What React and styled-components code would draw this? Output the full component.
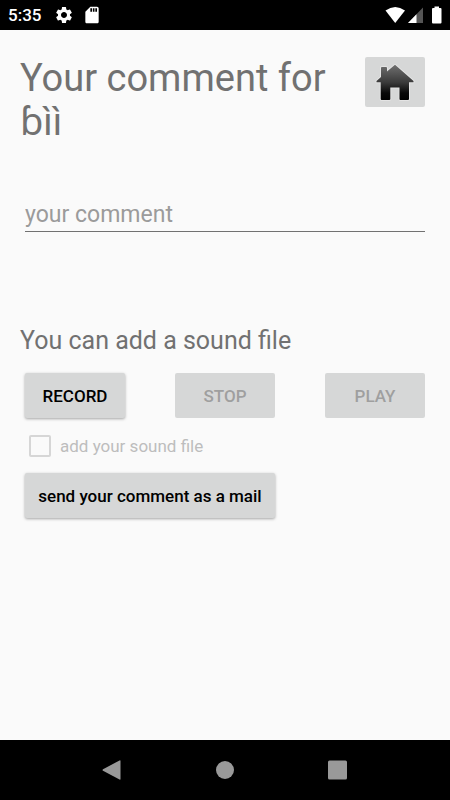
import { useState } from "react";
import styled, { createGlobalStyle } from "styled-components";
import { MdSettings, MdSdCard } from "react-icons/md";

const GlobalStyle = createGlobalStyle`
  * {
    box-sizing: border-box;
  }
  body {
    margin: 0;
    background: #fafafa;
    font-family: Roboto, "Noto Sans", sans-serif;
  }
`;

const Screen = styled.div`
  display: flex;
  flex-direction: column;
  min-height: 100vh;
`;

const StatusBar = styled.header`
  display: flex;
  align-items: center;
  height: 30px;
  padding: 0 8px;
  background: #000;
  color: #fff;
`;

const Clock = styled.span`
  margin-right: 13px;
  font-size: 17px;
  font-weight: 500;
  line-height: 30px;
`;

const Notifications = styled.div`
  display: flex;
  flex: 1;
  gap: 8px;
`;

const Signals = styled.div`
  display: flex;
  align-items: center;
`;

const Content = styled.main`
  flex: 1;
  padding: 26px 25px 20px 20px;
`;

const TitleRow = styled.div`
  display: flex;
  align-items: flex-start;
  justify-content: space-between;
  gap: 24px;
`;

const Title = styled.h1`
  margin: 0;
  font-size: 38px;
  font-weight: 400;
  line-height: 44px;
  color: #717171;
`;

const HomeButton = styled.button`
  display: flex;
  flex: none;
  align-items: center;
  justify-content: center;
  width: 60px;
  height: 50px;
  margin-top: 1px;
  padding: 0;
  border: 0;
  border-radius: 2px;
  background: #d6d7d7;
`;

const CommentInput = styled.input`
  display: block;
  width: calc(100% - 5px);
  height: 34px;
  margin: 54px 0 0 5px;
  padding: 0;
  border: 0;
  border-bottom: 1px solid #717171;
  border-radius: 0;
  outline: 0;
  background: transparent;
  font-family: inherit;
  font-size: 23px;
  color: #212121;
  &::placeholder {
    color: #9b9b9b;
    opacity: 1;
  }
`;

const SectionTitle = styled.h2`
  margin: 94px 0 17px;
  font-size: 25px;
  font-weight: 400;
  line-height: 30px;
  color: #717171;
`;

const ButtonRow = styled.div`
  display: flex;
  justify-content: space-between;
  padding-left: 5px;
`;

const Button = styled.button`
  width: ${({ $wide }) => ($wide ? "250px" : "100px")};
  height: 45px;
  padding: 0;
  border: 0;
  border-radius: 2px;
  background: #d6d7d7;
  box-shadow: 0 1px 3px rgba(0, 0, 0, 0.35);
  font-family: inherit;
  font-size: 17px;
  font-weight: 500;
  line-height: 20px;
  color: #000;
  &:disabled {
    box-shadow: none;
    color: #9f9f9f;
  }
`;

const CheckLabel = styled.label`
  display: flex;
  align-items: center;
  gap: 9px;
  height: 55px;
  padding: 1px 0 0 9px;
  font-size: 17px;
  color: #bdbdbd;
`;

const CheckBox = styled.input`
  appearance: none;
  width: 22px;
  height: 22px;
  margin: 0;
  border: 2px solid #d6d6d6;
  border-radius: 2px;
  &:checked {
    background: #d6d6d6;
  }
`;

const SendRow = styled.div`
  padding-left: 5px;
`;

const NavBar = styled.nav`
  display: flex;
  align-items: center;
  justify-content: center;
  gap: 73px;
  height: 60px;
  background: #000;
`;

const NavButton = styled.button`
  display: flex;
  width: 40px;
  height: 40px;
  align-items: center;
  justify-content: center;
  padding: 0;
  border: 0;
  background: none;
`;

function HomeIcon() {
    return (
        <svg width="40" height="38" viewBox="0 0 40 38" aria-hidden="true">
            <defs>
                <linearGradient id="roof" x1="0" y1="0" x2="0" y2="1">
                    <stop offset="0" stopColor="#707070" />
                    <stop offset="0.5" stopColor="#3a3a3a" />
                    <stop offset="0.8" stopColor="#080808" />
                    <stop offset="1" stopColor="#000" />
                </linearGradient>
            </defs>
            <path
                d="M20 1.8 L38.5 18 V19.3 H34 V36 Q34 37 33 37 H25.5 Q24.5 37 24.5 36 V24.5 H15.3 V36 Q15.3 37 14.3 37 H6.7 Q5.7 37 5.7 36 V19.3 H1.5 V18 L6 14 V4.8 Q6 4 7 4 H11 Q12 4 12 4.8 V8.5 Z"
                fill="url(#roof)"
                stroke="#f2f2f2"
                strokeOpacity="0.5"
                strokeWidth="2"
                strokeLinejoin="round"
                paintOrder="stroke"
            />
        </svg>
    );
}

function SignalIcons() {
    return (
        <svg width="58" height="20" viewBox="0 0 58 20" aria-hidden="true">
            <path d="M1.5 5.5 Q11.2 -1.5 21 5.5 L11.2 18 Z" fill="#fff" />
            <path d="M39 2.5 V18 H24 Z" fill="#555" />
            <path d="M32.5 9.2 V18 H24 Z" fill="#fff" />
            <path d="M50.5 3 V1.5 H55 V3 H56.5 Q57.5 3 57.5 4 V17.5 Q57.5 18.5 56.5 18.5 H49 Q48 18.5 48 17.5 V4 Q48 3 49 3 Z" fill="#fff" />
        </svg>
    );
}

function App() {
    const [comment, setComment] = useState("");

    return (
        <Screen>
            <GlobalStyle />
            <StatusBar>
                <Clock>5:35</Clock>
                <Notifications>
                    <MdSettings size={20} />
                    <MdSdCard size={20} />
                </Notifications>
                <Signals>
                    <SignalIcons />
                </Signals>
            </StatusBar>
            <Content>
                <TitleRow>
                    <Title>Your comment for ɓìì</Title>
                    <HomeButton type="button" aria-label="Home">
                        <HomeIcon />
                    </HomeButton>
                </TitleRow>
                <CommentInput
                    type="text"
                    aria-label="your comment"
                    placeholder="your comment"
                    value={comment}
                    onChange={(e) => setComment(e.target.value)}
                />
                <SectionTitle>You can add a sound file</SectionTitle>
                <ButtonRow>
                    <Button type="button">RECORD</Button>
                    <Button type="button" disabled>STOP</Button>
                    <Button type="button" disabled>PLAY</Button>
                </ButtonRow>
                <CheckLabel>
                    <CheckBox type="checkbox" disabled />
                    add your sound file
                </CheckLabel>
                <SendRow>
                    <Button type="button" $wide>send your comment as a mail</Button>
                </SendRow>
            </Content>
            <NavBar>
                <NavButton type="button" aria-label="Back">
                    <svg width="20" height="20" viewBox="0 0 20 20">
                        <path d="M17.5 0.5 Q18.5 0 18.5 1 V19 Q18.5 20 17.5 19.5 L1 10.8 Q0 10 1 9.2 Z" fill="#999" />
                    </svg>
                </NavButton>
                <NavButton type="button" aria-label="Home screen">
                    <svg width="18" height="18" viewBox="0 0 18 18">
                        <circle cx="9" cy="9" r="9" fill="#999" />
                    </svg>
                </NavButton>
                <NavButton type="button" aria-label="Recent apps">
                    <svg width="20" height="20" viewBox="0 0 20 20">
                        <rect x="0" y="0.5" width="19" height="19" rx="1.5" fill="#999" />
                    </svg>
                </NavButton>
            </NavBar>
        </Screen>
    );
}

export default App;
